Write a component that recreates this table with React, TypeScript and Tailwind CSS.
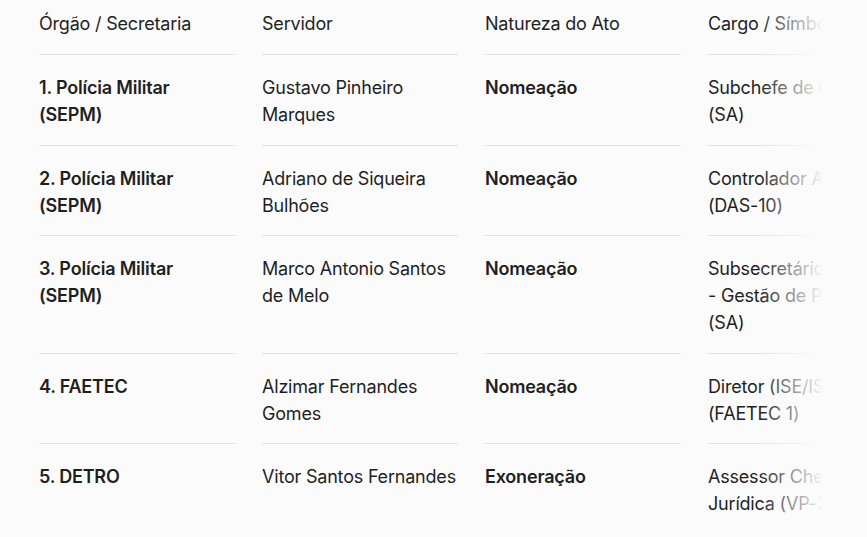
const rows = [
  { org: "1. Polícia Militar (SEPM)", servidor: "Gustavo Pinheiro Marques", ato: "Nomeação", cargo: ["Subchefe de Gabinete", "(SA)"] },
  { org: "2. Polícia Militar (SEPM)", servidor: "Adriano de Siqueira Bulhões", ato: "Nomeação", cargo: ["Controlador Adjunto", "(DAS-10)"] },
  { org: "3. Polícia Militar (SEPM)", servidor: "Marco Antonio Santos de Melo", ato: "Nomeação", cargo: ["Subsecretário Adjunto", "- Gestão de Pessoas", "(SA)"] },
  { org: "4. FAETEC", servidor: "Alzimar Fernandes Gomes", ato: "Nomeação", cargo: ["Diretor (ISE/ISTEC)", "(FAETEC 1)"] },
  { org: "5. DETRO", servidor: "Vitor Santos Fernandes", ato: "Exoneração", cargo: ["Assessor Chefe de Assessoria", "Jurídica (VP-3)"] },
]

export default function App() {
  return (
    <div className="h-[537px] overflow-hidden bg-[#fbfbfb] text-[#1f1f1f] text-[18px] leading-[27px] font-['Inter',sans-serif] tracking-[-0.2px] pl-[39px] pt-[10px]">
      <div className="relative w-[784px] overflow-hidden">
        <div className="grid grid-cols-[196px_196px_196px_196px] gap-x-[27px] w-[865px]">
          <div className="border-b border-[#e3e3e3] pb-[17px]">Órgão / Secretaria</div>
          <div className="border-b border-[#e3e3e3] pb-[17px]">Servidor</div>
          <div className="border-b border-[#e3e3e3] pb-[17px]">Natureza do Ato</div>
          <div className="border-b border-[#e3e3e3] pb-[17px] whitespace-nowrap">Cargo / Símbolo</div>
          {rows.map((r, i) => {
            const cell = `pt-[19px] pb-[16.5px] ${i < rows.length - 1 ? "border-b border-[#e3e3e3]" : ""}`
            return (
              <div key={i} className="contents">
                <div className={`${cell} font-semibold`}>{r.org}</div>
                <div className={cell}>{r.servidor}</div>
                <div className={`${cell} font-semibold`}>{r.ato}</div>
                <div className={`${cell} whitespace-nowrap`}>
                  {r.cargo.map((l, j) => (
                    <div key={j}>{l}</div>
                  ))}
                </div>
              </div>
            )
          })}
        </div>
        <div className="absolute top-0 right-0 bottom-0 w-[64px] bg-gradient-to-r from-[#fbfbfb]/0 to-[#fbfbfb] pointer-events-none" />
      </div>
    </div>
  )
}
